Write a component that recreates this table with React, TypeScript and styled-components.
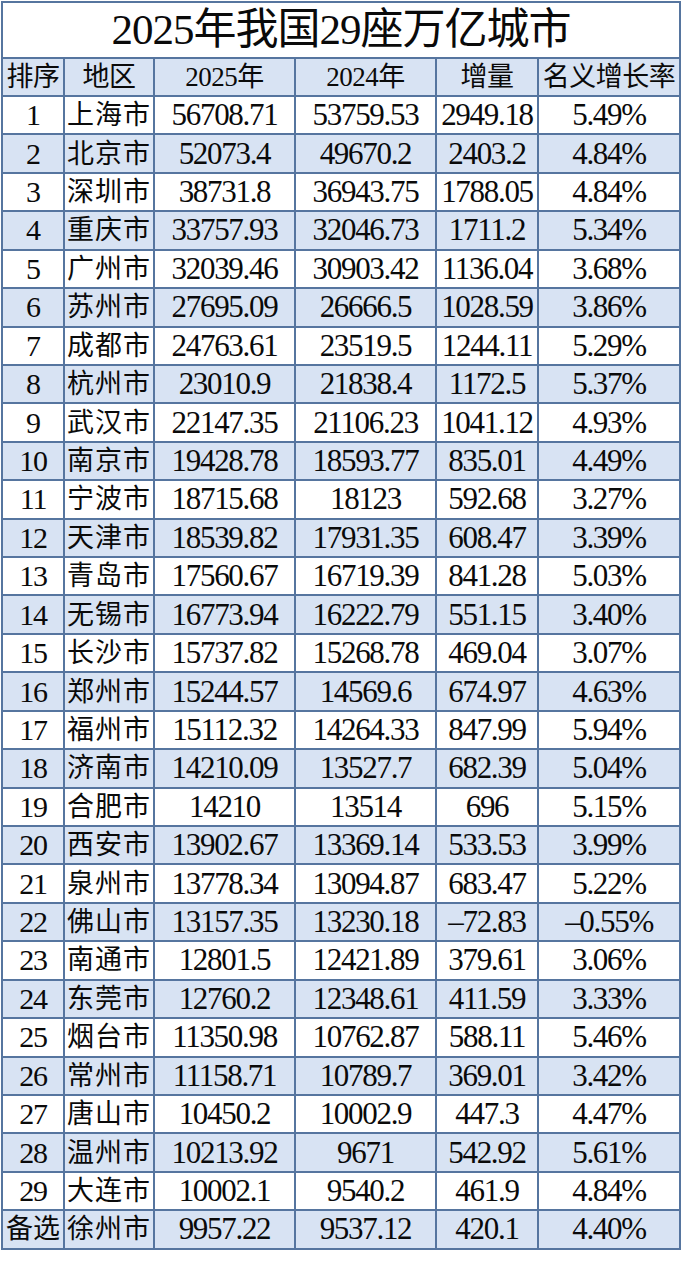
import React from "react";
import styled, { createGlobalStyle } from "styled-components";

const LINE = "#56759f";
const TINT = "#d8e3f3";

type Row = [string, string, string, string, string, string];

const ROWS: Row[] = [
  ["1", "上海市", "56708.71", "53759.53", "2949.18", "5.49%"],
  ["2", "北京市", "52073.4", "49670.2", "2403.2", "4.84%"],
  ["3", "深圳市", "38731.8", "36943.75", "1788.05", "4.84%"],
  ["4", "重庆市", "33757.93", "32046.73", "1711.2", "5.34%"],
  ["5", "广州市", "32039.46", "30903.42", "1136.04", "3.68%"],
  ["6", "苏州市", "27695.09", "26666.5", "1028.59", "3.86%"],
  ["7", "成都市", "24763.61", "23519.5", "1244.11", "5.29%"],
  ["8", "杭州市", "23010.9", "21838.4", "1172.5", "5.37%"],
  ["9", "武汉市", "22147.35", "21106.23", "1041.12", "4.93%"],
  ["10", "南京市", "19428.78", "18593.77", "835.01", "4.49%"],
  ["11", "宁波市", "18715.68", "18123", "592.68", "3.27%"],
  ["12", "天津市", "18539.82", "17931.35", "608.47", "3.39%"],
  ["13", "青岛市", "17560.67", "16719.39", "841.28", "5.03%"],
  ["14", "无锡市", "16773.94", "16222.79", "551.15", "3.40%"],
  ["15", "长沙市", "15737.82", "15268.78", "469.04", "3.07%"],
  ["16", "郑州市", "15244.57", "14569.6", "674.97", "4.63%"],
  ["17", "福州市", "15112.32", "14264.33", "847.99", "5.94%"],
  ["18", "济南市", "14210.09", "13527.7", "682.39", "5.04%"],
  ["19", "合肥市", "14210", "13514", "696", "5.15%"],
  ["20", "西安市", "13902.67", "13369.14", "533.53", "3.99%"],
  ["21", "泉州市", "13778.34", "13094.87", "683.47", "5.22%"],
  ["22", "佛山市", "13157.35", "13230.18", "–72.83", "–0.55%"],
  ["23", "南通市", "12801.5", "12421.89", "379.61", "3.06%"],
  ["24", "东莞市", "12760.2", "12348.61", "411.59", "3.33%"],
  ["25", "烟台市", "11350.98", "10762.87", "588.11", "5.46%"],
  ["26", "常州市", "11158.71", "10789.7", "369.01", "3.42%"],
  ["27", "唐山市", "10450.2", "10002.9", "447.3", "4.47%"],
  ["28", "温州市", "10213.92", "9671", "542.92", "5.61%"],
  ["29", "大连市", "10002.1", "9540.2", "461.9", "4.84%"],
  ["备选", "徐州市", "9957.22", "9537.12", "420.1", "4.40%"],
];

const HEADERS = ["排序", "地区", "2025年", "2024年", "增量", "名义增长率"];
const WIDTHS = [62, 90, 141, 141, 102, 142];

export default function App() {
  return (
    <Page>
      <GlobalStyle />
      <Table>
        <colgroup>
          {WIDTHS.map((w, i) => (
            <col key={i} style={{ width: w }} />
          ))}
        </colgroup>
        <thead>
          <tr>
            <Title colSpan={6}>2025年我国29座万亿城市</Title>
          </tr>
          <HeadRow>
            {HEADERS.map((h) => (
              <HeadCell key={h}>{h}</HeadCell>
            ))}
          </HeadRow>
        </thead>
        <tbody>
          {ROWS.map((r, i) => (
            <DataRow key={r[1]} $tinted={i % 2 === 1}>
              <Rank $cjk={r[0] === "备选"}>{r[0]}</Rank>
              <City>{r[1]}</City>
              <Num>{r[2]}</Num>
              <Num>{r[3]}</Num>
              <Num>{r[4]}</Num>
              <Num>{r[5]}</Num>
            </DataRow>
          ))}
        </tbody>
      </Table>
    </Page>
  );
}

const GlobalStyle = createGlobalStyle`
  html, body {
    margin: 0;
    padding: 0;
    background: #ffffff;
  }
`;

const Page = styled.div`
  width: 683px;
  height: 1267px;
  padding: 1px 0 0 1px;
  box-sizing: border-box;
  background: #ffffff;
  font-family: "Liberation Serif", "Noto Sans CJK SC", serif;
  color: #0a0a0a;
`;

const Table = styled.table`
  border-collapse: collapse;
  table-layout: fixed;
  width: 678px;
  border: 2px solid ${LINE};

  th,
  td {
    border: 2px solid ${LINE};
    padding: 0;
    white-space: nowrap;
    overflow: hidden;
  }
`;

const Title = styled.th`
  height: 54px;
  font-size: 43px;
  font-weight: 400;
  text-align: center;
  letter-spacing: -1px;
  background: #ffffff;
  line-height: 54px;
`;

const HeadRow = styled.tr`
  height: 38px;
  background: ${TINT};
`;

const HeadCell = styled.th`
  font-size: 27px;
  font-weight: 400;
  text-align: center;
  line-height: 36px;
  letter-spacing: -0.5px;
`;

const DataRow = styled.tr<{ $tinted: boolean }>`
  height: 38.43px;
  background: ${(p) => (p.$tinted ? TINT : "#ffffff")};
`;

const Rank = styled.td<{ $cjk: boolean }>`
  font-size: ${(p) => (p.$cjk ? "27px" : "30px")};
  text-align: center;
  letter-spacing: ${(p) => (p.$cjk ? "0" : "-1.2px")};
  line-height: 36px;
`;

const City = styled.td`
  font-size: 27px;
  text-align: left;
  padding-left: 2px !important;
  letter-spacing: 1px;
  line-height: 36px;
`;

const Num = styled.td`
  font-size: 31px;
  text-align: center;
  letter-spacing: -1.3px;
  line-height: 36px;
`;
